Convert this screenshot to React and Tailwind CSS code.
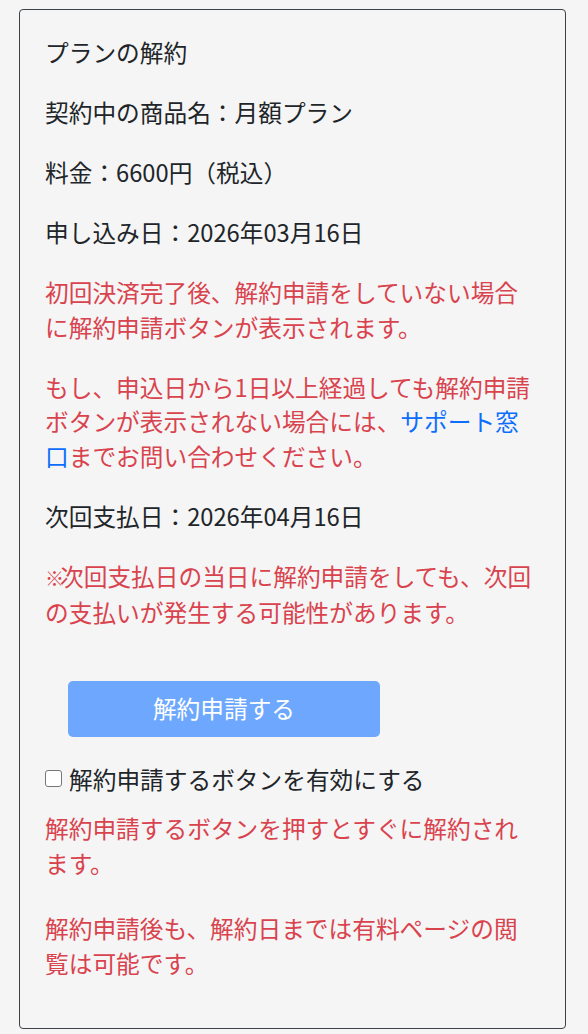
import React from 'react';

const Para = ({ className = '', children }) => (
  <p className={`mb-[25.5px] ${className}`}>{children}</p>
);

export default function App() {
  return (
    <div
      className="min-h-screen bg-[#f5f5f5] pl-[19px] pr-[22px] pt-[9px] pb-[6px] text-[23.7px] leading-[34.5px] text-[#212529]"
      style={{ fontFamily: '"Noto Sans CJK JP", "Noto Sans", sans-serif' }}
    >
      <div className="rounded-[4px] border-[1.5px] border-[#3d4248] bg-[#f5f5f5] pl-[25px] pr-[30px] pt-[25px] pb-[22px]">
        <Para>プランの解約</Para>
        <Para>契約中の商品名：月額プラン</Para>
        <Para>料金：6600円（税込）</Para>
        <Para>申し込み日：2026年03月16日</Para>
        <Para className="text-[#d9434e]">
          初回決済完了後、解約申請をしていない場合に解約申請ボタンが表示されます。
        </Para>
        <Para className="text-[#d9434e]">
          もし、申込日から1日以上経過しても解約申請ボタンが表示されない場合には、
          <a href="#" className="text-[#0d6efd]">サポート窓口</a>
          までお問い合わせください。
        </Para>
        <Para>次回支払日：2026年04月16日</Para>
        <p className="text-[#d9434e]">
          <span className="inline-block w-[15px] text-[19px] font-black">※</span>
          次回支払日の当日に解約申請をしても、次回の支払いが発生する可能性があります。
        </p>

        {/* button */}
        <div className="mt-[51px] pl-[23px]">
          <button
            disabled
            className="h-[56px] w-[312px] rounded-[5px] bg-[#6ea8fe] text-[23.7px] text-white"
          >
            解約申請する
          </button>
        </div>

        <label className="mt-[25px] flex items-center">
          <span className="mr-[7px] inline-block h-[17px] w-[17px] rounded-[3px] border border-[#767676] bg-white" />
          解約申請するボタンを有効にする
        </label>

        <p className="mt-[15px] mb-[31px] text-[#d9434e]">
          解約申請するボタンを押すとすぐに解約されます。
        </p>
        <Para className="text-[#d9434e]">
          解約申請後も、解約日までは有料ページの閲覧は可能です。
        </Para>
      </div>
    </div>
  );
}
